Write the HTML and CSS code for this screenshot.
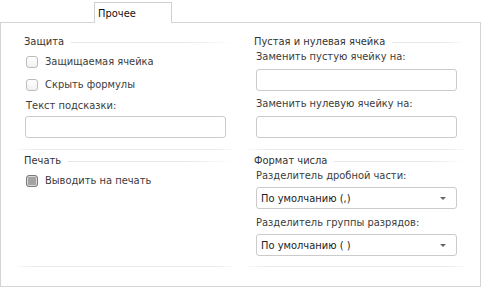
FILE: index.html
```html
<!DOCTYPE html>
<html lang="ru">
<head>
    <meta charset="UTF-8">
    <title>Прочее</title>
    <link rel="stylesheet" href="styles.css">
</head>
<body>
    <div class="tabs">
        <div class="tab">Прочее</div>
    </div>
    <div class="panel">
        <div class="col col-left">
            <div class="group-title"><span>Защита</span></div>
            <label class="check"><i class="box"></i>Защищаемая ячейка</label>
            <label class="check"><i class="box"></i>Скрыть формулы</label>
            <div class="field-label hint-label">Текст подсказки:</div>
            <div class="input"></div>
            <div class="divider"></div>
            <div class="group-title"><span>Печать</span></div>
            <label class="check"><i class="box checked"></i>Выводить на печать</label>
            <div class="divider"></div>
        </div>
        <div class="col col-right">
            <div class="group-title"><span>Пустая и нулевая ячейка</span></div>
            <div class="field-label first">Заменить пустую ячейку на:</div>
            <div class="input"></div>
            <div class="field-label">Заменить нулевую ячейку на:</div>
            <div class="input"></div>
            <div class="divider"></div>
            <div class="group-title"><span>Формат числа</span></div>
            <div class="field-label first">Разделитель дробной части:</div>
            <div class="select">По умолчанию (,)<b class="arrow"></b></div>
            <div class="field-label">Разделитель группы разрядов:</div>
            <div class="select">По умолчанию ( )<b class="arrow"></b></div>
            <div class="divider"></div>
        </div>
    </div>
</body>
</html>
```

FILE: styles.css
```css
body {
    margin: 0;
    padding: 0;
    background: #fff;
    font-family: "DejaVu Sans Condensed", "Liberation Sans", Arial, sans-serif;
    font-size: 11px;
    color: #3c3c3c;
}

.tabs {
    height: 22px;
    display: flex;
    align-items: flex-end;
}

.tab {
    margin-left: 94px;
    width: 78px;
    height: 21px;
    border: 1px solid #d0d0d0;
    border-bottom: none;
    background: #fff;
    box-sizing: border-box;
    padding: 4px 0 0 3px;
    color: #111;
    position: relative;
    top: 1px;
}

.panel {
    height: 265px;
    box-sizing: border-box;
    border: 1px solid #d4d4d4;
    display: flex;
    padding: 0 14px 0 16px;
    gap: 14px;
}

.col {
    width: 217px;
    display: flex;
    flex-direction: column;
    padding-top: 11px;
}

.col-left > * {
    margin-left: 7px;
}

.col-right > * {
    margin-left: 6px;
}

.col > .divider {
    margin-left: 0;
}

.group-title {
    height: 16px;
    line-height: 16px;
    display: flex;
    align-items: center;
    gap: 7px;
    color: #333;
}

.group-title::after {
    content: "";
    flex: 1;
    height: 1px;
    background: linear-gradient(to right, #e6e6e6 70%, #fff);
}

.check {
    height: 23px;
    display: flex;
    align-items: center;
    gap: 7px;
    padding-left: 2px;
}

.box {
    width: 12px;
    height: 12px;
    box-sizing: border-box;
    border: 1px solid #bcbcbc;
    border-radius: 3px;
    background: linear-gradient(#fff, #f1f1f1);
}

.box.checked {
    border-color: #7c7c7c;
    background: #a4a4a4;
    box-shadow: inset 0 0 0 1px #d8d8d8;
}

.field-label {
    height: 14px;
    line-height: 14px;
    margin-top: 6px;
    padding-left: 2px;
}

.field-label.first {
    margin-top: 0;
}

.hint-label {
    margin-top: 3px;
}

.input,
.select {
    width: 201px;
    height: 22px;
    box-sizing: border-box;
    border: 1px solid #cbcbcb;
    border-radius: 3px;
    background: #fff;
    margin-top: 5px;
    margin-left: 8px;
}

.col-left .input {
    margin-top: 3px;
}

.select {
    display: flex;
    align-items: center;
    padding-left: 4px;
    color: #222;
    position: relative;
}

.field-label + .select {
    margin-top: 4px;
}

.select + .field-label {
    margin-top: 7px;
}

.arrow {
    position: absolute;
    right: 10px;
    top: 9px;
    width: 0;
    height: 0;
    border-left: 3px solid transparent;
    border-right: 3px solid transparent;
    border-top: 3px solid #666;
}

.divider {
    height: 1px;
    margin-top: 11px;
    margin-bottom: 3px;
    background: linear-gradient(to right, #fafafa, #e8e8e8 10%, #e8e8e8 90%, #fafafa);
}

.col > .divider:last-child {
    margin-top: auto;
    margin-bottom: 19px;
}
```
